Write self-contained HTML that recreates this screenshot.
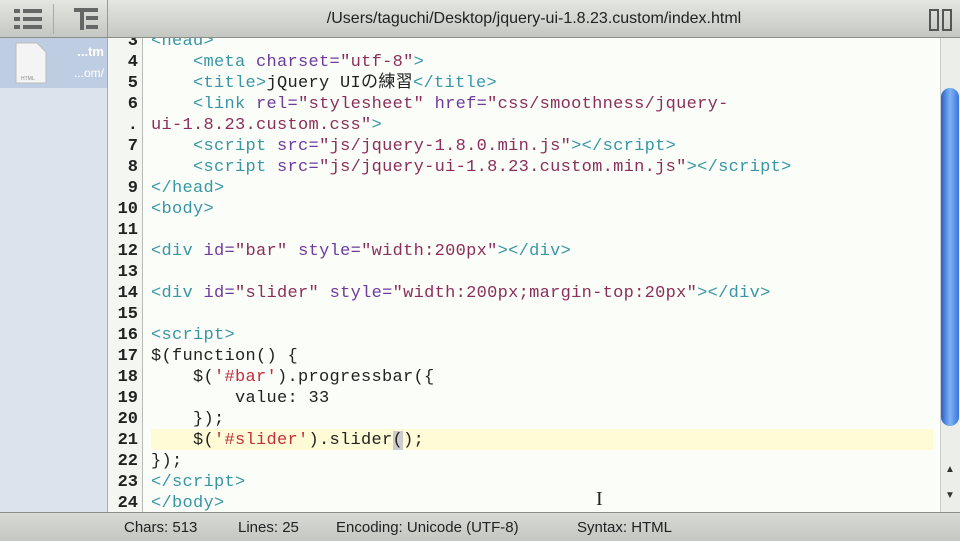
<!DOCTYPE html>
<html><head><meta charset="utf-8"><style>
body{margin:0;width:960px;height:540px;overflow:hidden;background:#fbfdf8;font-family:"Liberation Sans",sans-serif;position:relative}
.top{position:absolute;left:0;top:0;width:960px;height:37px;background:linear-gradient(#e4e6e2,#c4c7c2);border-bottom:1px solid #8c8e8a;z-index:5}
.title{position:absolute;left:108px;right:0;top:10px;text-align:center;font-size:16px;color:#222}
.side{position:absolute;left:0;top:38px;width:107px;height:474px;background:#dde3ec;border-right:1px solid #aab}
.sel{position:absolute;left:0;top:0;width:107px;height:50px;background:#bfcde3}
.gut{position:absolute;left:108px;top:38px;width:34px;height:474px;background:#f4f6f1;border-right:1px solid #b8bab6}
pre{margin:0;font-family:"Liberation Mono",monospace;font-size:17px;line-height:21px;position:absolute;top:31px}
.nums{left:108px;width:30px;text-align:right;color:#222;font-weight:bold}
.code{left:151px;color:#222;letter-spacing:0.3px}
.t{color:#3896a4}.a{color:#6e3a9c}.s{color:#8a2f5a}.r{color:#c03040}
.hl{position:absolute;left:151px;top:429px;width:782px;height:21px;background:#fffbd6}
.sb{position:absolute;left:940px;top:38px;width:20px;height:474px;background:#eceee9;border-left:1px solid #ccc}
.thumb{position:absolute;left:941px;top:88px;width:18px;height:338px;border-radius:9px;background:linear-gradient(90deg,#2a5fc8,#7fb4f4,#3a74dc);}
.st{position:absolute;left:0;top:512px;width:960px;height:28px;background:linear-gradient(#d8dad6,#c4c6c2);border-top:1px solid #8c8e8a;font-size:15px;color:#222;z-index:5}
.st span{position:absolute;top:6px}
</style></head><body>
<div class="top">
<svg style="position:absolute;left:14px;top:8px" width="30" height="22"><g fill="#666"><rect x="0" y="1" width="6" height="4"/><rect x="9" y="1" width="19" height="4"/><rect x="0" y="9" width="6" height="4"/><rect x="9" y="9" width="19" height="4"/><rect x="0" y="17" width="6" height="4"/><rect x="9" y="17" width="19" height="4"/></g></svg>
<div style="position:absolute;left:53px;top:4px;width:1px;height:30px;background:#aaa"></div>
<svg style="position:absolute;left:74px;top:8px" width="26" height="24"><g fill="#666"><rect x="0" y="0" width="24" height="4"/><rect x="6" y="0" width="4" height="22"/><rect x="12" y="8" width="12" height="4"/><rect x="12" y="17" width="12" height="4"/></g></svg>
<div style="position:absolute;left:107px;top:0;width:1px;height:37px;background:#999"></div>
<div class="title">/Users/taguchi/Desktop/jquery-ui-1.8.23.custom/index.html</div>
<svg style="position:absolute;left:928px;top:9px" width="26" height="22"><g fill="none" stroke="#555" stroke-width="2"><rect x="2" y="1" width="8" height="20"/><rect x="15" y="1" width="8" height="20"/></g></svg>
</div>
<div class="side"><div class="sel"></div>
<svg style="position:absolute;left:15px;top:4px" width="32" height="42"><path d="M1 1H22L31 10V41H1Z" fill="#f4f4f4" stroke="#bbb"/><text x="6" y="38" font-size="5" fill="#888" font-family="Liberation Sans">HTML</text></svg>
<div style="position:absolute;right:3px;top:6px;color:#fff;font-size:13px;font-weight:bold">...tm</div>
<div style="position:absolute;right:3px;top:28px;color:#fff;font-size:12px">...om/</div>
</div>
<div class="gut"></div>
<div class="hl"></div>
<pre class="nums">3
4
5
6
.
7
8
9
10
11
12
13
14
15
16
17
18
19
20
21
22
23
24</pre>
<pre class="code"><span class="t">&lt;head&gt;</span>
    <span class="t">&lt;meta</span> <span class="a">charset=</span><span class="s">"utf-8"</span><span class="t">&gt;</span>
    <span class="t">&lt;title&gt;</span>jQuery UIの練習<span class="t">&lt;/title&gt;</span>
    <span class="t">&lt;link</span> <span class="a">rel=</span><span class="s">"stylesheet"</span> <span class="a">href=</span><span class="s">"css/smoothness/jquery-</span>
<span class="s">ui-1.8.23.custom.css"</span><span class="t">&gt;</span>
    <span class="t">&lt;script</span> <span class="a">src=</span><span class="s">"js/jquery-1.8.0.min.js"</span><span class="t">&gt;&lt;/script&gt;</span>
    <span class="t">&lt;script</span> <span class="a">src=</span><span class="s">"js/jquery-ui-1.8.23.custom.min.js"</span><span class="t">&gt;&lt;/script&gt;</span>
<span class="t">&lt;/head&gt;</span>
<span class="t">&lt;body&gt;</span>

<span class="t">&lt;div</span> <span class="a">id=</span><span class="s">"bar"</span> <span class="a">style=</span><span class="s">"width:200px"</span><span class="t">&gt;&lt;/div&gt;</span>

<span class="t">&lt;div</span> <span class="a">id=</span><span class="s">"slider"</span> <span class="a">style=</span><span class="s">"width:200px;margin-top:20px"</span><span class="t">&gt;&lt;/div&gt;</span>

<span class="t">&lt;script&gt;</span>
$(function() {
    $(<span class="r">'#bar'</span>).progressbar({
        value: 33
    });
    $(<span class="r">'#slider'</span>).slider<span style="background:#ccc">(</span>);
});
<span class="t">&lt;/script&gt;</span>
<span class="t">&lt;/body&gt;</span></pre>
<div class="sb"></div><div class="thumb"></div>
<div style="position:absolute;left:945px;top:464px;font-size:10px;color:#333">▲</div>
<div style="position:absolute;left:945px;top:490px;font-size:10px;color:#333">▼</div>
<div style="position:absolute;left:596px;top:488px;font-size:20px;color:#222;font-family:'Liberation Serif'">I</div>
<div class="st"><span style="left:124px">Chars: 513</span><span style="left:238px">Lines: 25</span><span style="left:336px">Encoding: Unicode (UTF-8)</span><span style="left:577px">Syntax: HTML</span></div>
</body></html>
